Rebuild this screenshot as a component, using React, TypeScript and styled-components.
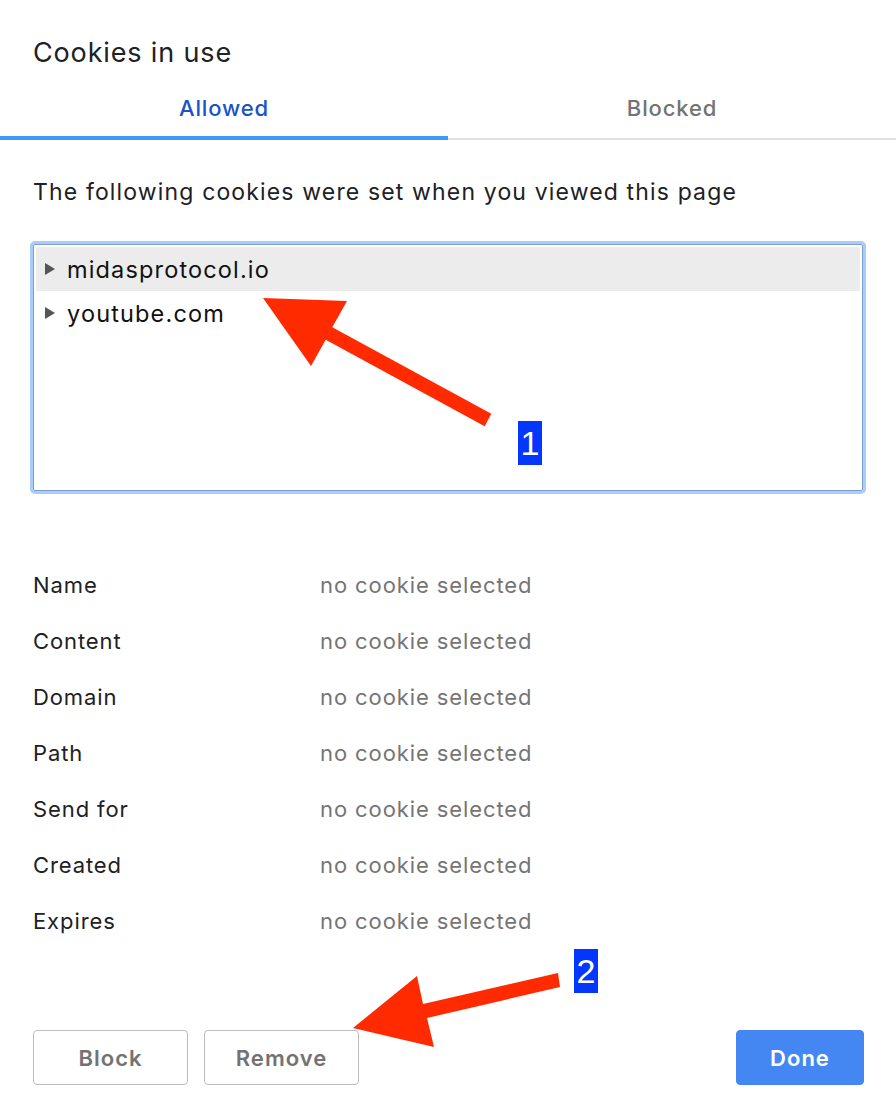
import React from "react";
import styled, { createGlobalStyle } from "styled-components";

const Global = createGlobalStyle`
  html, body { margin: 0; padding: 0; background: #fff; }
  body { font-family: Inter, Roboto, "Liberation Sans", Arial, sans-serif; }
  * { box-sizing: border-box; }
`;

const Page = styled.div`
  position: relative;
  width: 896px;
  height: 1114px;
  background: #fff;
  overflow: hidden;
  display: flex;
  flex-direction: column;
`;

const Title = styled.h1`
  margin: 37px 0 0 33px;
  font-size: 27px;
  line-height: 32px;
  font-weight: 400;
  letter-spacing: 0.85px;
  color: #202124;
  height: 43px;
`;

const TabBar = styled.div`
  display: flex;
  height: 60px;
  border-bottom: 2px solid #e0e0e0;
`;

const Tab = styled.div<{ $active?: boolean }>`
  flex: 1;
  height: 60px;
  margin-bottom: -2px;
  display: flex;
  align-items: center;
  justify-content: center;
  font-size: 22px;
  font-weight: 500;
  letter-spacing: 0.85px;
  color: ${(p) => (p.$active ? "#1a53c9" : "#737373")};
  border-bottom: 4px solid ${(p) => (p.$active ? "#3d9bf8" : "transparent")};
`;

const Intro = styled.p`
  margin: 37px 0 0 33px;
  font-size: 23px;
  line-height: 30px;
  letter-spacing: 1.15px;
  color: #202124;
`;

const TreeBox = styled.div`
  margin: 37px 0 0 33px;
  width: 830px;
  height: 247px;
  border: 1px solid #7d9fcc;
  border-radius: 2px;
  box-shadow: 0 0 0 3px #a9cdf8;
  padding: 2px;
  display: flex;
  flex-direction: column;
`;

const TreeRow = styled.div<{ $selected?: boolean }>`
  height: 44px;
  display: flex;
  align-items: center;
  gap: 12px;
  padding-left: 9px;
  background: ${(p) => (p.$selected ? "#ececec" : "transparent")};
  font-size: 23.5px;
  letter-spacing: 1.15px;
  color: #111;
`;

const Triangle = styled.span`
  width: 0;
  height: 0;
  border-top: 6px solid transparent;
  border-bottom: 6px solid transparent;
  border-left: 10px solid #555;
`;

const Details = styled.div`
  margin: 66px 0 0 33px;
  display: flex;
  flex-direction: column;
`;

const DetailRow = styled.div`
  height: 56px;
  display: grid;
  grid-template-columns: 287px 1fr;
  align-items: center;
  font-size: 22px;
  letter-spacing: 0.9px;
`;

const Label = styled.span`
  color: #202124;
`;

const Value = styled.span`
  color: #757575;
`;

const Footer = styled.div`
  margin: 81px 32px 0 33px;
  display: flex;
  gap: 16px;
`;

const Button = styled.button<{ $primary?: boolean }>`
  height: 55px;
  width: ${(p) => (p.$primary ? "128px" : "155px")};
  margin-left: ${(p) => (p.$primary ? "auto" : "0")};
  border-radius: 4px;
  border: 1px solid ${(p) => (p.$primary ? "#4285f4" : "#bdbdbd")};
  background: ${(p) => (p.$primary ? "#4487f2" : "#fff")};
  color: ${(p) => (p.$primary ? "#fff" : "#737373")};
  font-family: Inter, Roboto, "Liberation Sans", Arial, sans-serif;
  font-size: 22px;
  font-weight: 600;
  letter-spacing: 1px;
  padding: 0;
`;

const Overlay = styled.svg`
  position: absolute;
  left: 0;
  top: 0;
  pointer-events: none;
`;

const Badge = styled.div<{ $x: number; $y: number }>`
  position: absolute;
  left: ${(p) => p.$x}px;
  top: ${(p) => p.$y}px;
  width: 24px;
  height: 44px;
  background: #0437fd;
  color: #fff;
  font-family: "Liberation Sans", Arial, sans-serif;
  font-size: 34px;
  line-height: 44px;
  text-align: center;
`;

const rows = ["Name", "Content", "Domain", "Path", "Send for", "Created", "Expires"];

export default function App() {
  return (
    <Page>
      <Global />
      <Title>Cookies in use</Title>
      <TabBar>
        <Tab $active>Allowed</Tab>
        <Tab>Blocked</Tab>
      </TabBar>
      <Intro>The following cookies were set when you viewed this page</Intro>
      <TreeBox>
        <TreeRow $selected>
          <Triangle />
          midasprotocol.io
        </TreeRow>
        <TreeRow>
          <Triangle />
          youtube.com
        </TreeRow>
      </TreeBox>
      <Details>
        {rows.map((r) => (
          <DetailRow key={r}>
            <Label>{r}</Label>
            <Value>no cookie selected</Value>
          </DetailRow>
        ))}
      </Details>
      <Footer>
        <Button>Block</Button>
        <Button>Remove</Button>
        <Button $primary>Done</Button>
      </Footer>
      <Overlay width="896" height="1114" viewBox="0 0 896 1114">
        <polygon
          fill="#ff2a00"
          points="263,298 347,301 332.3,327.3 491.3,413.8 484.7,426.2 325.7,339.7 311,366"
        />
        <polygon
          fill="#ff2a00"
          points="353,1028 417,976 423,1004 558,973 560,987 427,1018 434,1047"
        />
      </Overlay>
      <Badge $x={518} $y={421}>1</Badge>
      <Badge $x={574} $y={949}>2</Badge>
    </Page>
  );
}
